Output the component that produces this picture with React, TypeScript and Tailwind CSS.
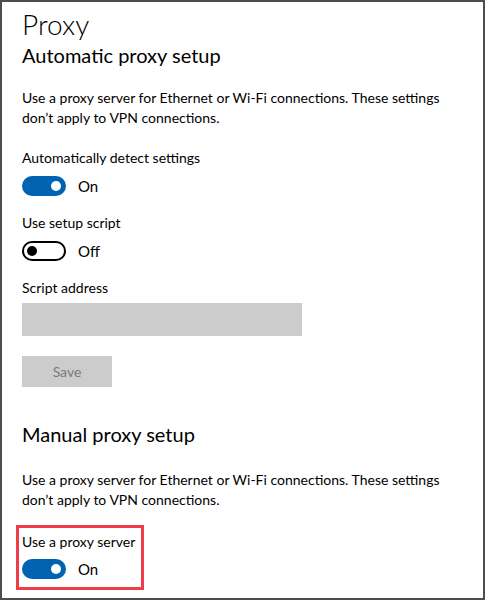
import React from 'react';

const font = { fontFamily: 'Lato, "Open Sans", sans-serif' };

function Toggle({ on }: { on: boolean }) {
  return (
    <div className="flex items-center gap-3 h-[20px]">
      {on ? (
        <div className="w-[44px] h-[20px] rounded-full bg-[#0063b1] flex items-center justify-end pr-[5px]">
          <div className="w-[10px] h-[10px] rounded-full bg-white" />
        </div>
      ) : (
        <div className="w-[44px] h-[20px] rounded-full border-2 border-black flex items-center pl-[3px]">
          <div className="w-[10px] h-[10px] rounded-full bg-black" />
        </div>
      )}
      <span className="text-[15px] leading-[20px] text-black">{on ? 'On' : 'Off'}</span>
    </div>
  );
}

export default function App() {
  return (
    <div
      style={font}
      className="w-[485px] h-[600px] border-2 border-[#4d4d4d] bg-white text-black pl-[20px] overflow-hidden"
    >
      <h1 className="text-[28px] leading-[34px] mt-[5px] font-light">Proxy</h1>
      <h2 className="text-[20px] leading-[28px] font-normal">Automatic proxy setup</h2>

      <p className="text-[14px] leading-[20px] mt-[19px] w-[440px]">
        Use a proxy server for Ethernet or Wi-Fi connections. These settings don’t apply to VPN connections.
      </p>

      <div className="mt-[19px] text-[14px] leading-[21px]">Automatically detect settings</div>
      <div className="mt-[8px]"><Toggle on /></div>

      <div className="mt-[16px] text-[14px] leading-[21px]">Use setup script</div>
      <div className="mt-[8px]"><Toggle on={false} /></div>

      <div className="mt-[16px] text-[14px] leading-[21px]">Script address</div>
      <div className="mt-[5px] w-[280px] h-[33px] bg-[#cccccc]" />

      <button className="mt-[20px] w-[90px] h-[31px] bg-[#cccccc] text-[#7a7a7a] text-[14px] block">Save</button>

      <h2 className="mt-[33px] text-[20px] leading-[28px] font-normal">Manual proxy setup</h2>

      <p className="text-[14px] leading-[20px] mt-[22px] w-[440px]">
        Use a proxy server for Ethernet or Wi-Fi connections. These settings don’t apply to VPN connections.
      </p>

      <div className="mt-[15px] -ml-[6px] w-[128px] h-[65px] border-[3px] border-[#ef3e4a] pl-[3px] pt-[3px]">
        <div className="text-[14px] leading-[21px] whitespace-nowrap">Use a proxy server</div>
        <div className="mt-[7px]"><Toggle on /></div>
      </div>
    </div>
  );
}
